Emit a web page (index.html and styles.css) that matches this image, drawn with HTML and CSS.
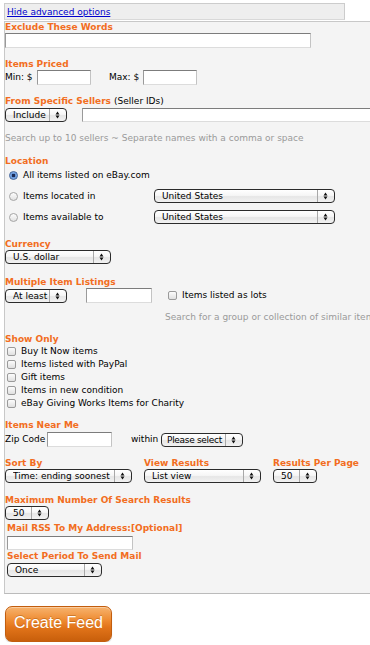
FILE: index.html
```html
<!DOCTYPE html>
<html lang="en">
<head>
    <meta charset="UTF-8">
    <title>Create Feed - Advanced Options</title>
    <link rel="stylesheet" href="styles.css">
</head>
<body>
    <div class="tab"><a href="#">Hide advanced options</a></div>
    <form class="panel">
        <h4 class="lbl">Exclude These Words</h4>
        <input class="txt exclude" type="text">

        <h4 class="lbl m11">Items Priced</h4>
        <div class="row">
            <span class="price-lbl">Min: $</span><input class="txt price" type="text">
            <span class="price-lbl max">Max: $</span><input class="txt price" type="text">
        </div>

        <h4 class="lbl m11">From Specific Sellers <span class="plain">(Seller IDs)</span></h4>
        <div class="row seller-row">
            <select class="sel sel-include"><option>Include</option></select>
            <input class="txt sellers" type="text">
        </div>
        <p class="hint">Search up to 10 sellers ~ Separate names with a comma or space</p>

        <h4 class="lbl m11">Location</h4>
        <label class="loc"><input type="radio" name="loc" checked><span>All items listed on eBay.com</span></label>
        <label class="loc"><input type="radio" name="loc"><span class="loc-txt">Items located in</span>
            <select class="sel sel-country"><option>United States</option></select></label>
        <label class="loc"><input type="radio" name="loc"><span class="loc-txt">Items available to</span>
            <select class="sel sel-country"><option>United States</option></select></label>

        <h4 class="lbl m15">Currency</h4>
        <select class="sel sel-currency"><option>U.S. dollar</option></select>

        <h4 class="lbl m13">Multiple Item Listings</h4>
        <div class="row multi-row">
            <select class="sel sel-include"><option>At least</option></select>
            <input class="txt qty" type="text">
            <label class="chk lots"><input type="checkbox"><span>Items listed as lots</span></label>
        </div>
        <p class="hint lots-hint">Search for a group or collection of similar items</p>

        <h4 class="lbl m10">Show Only</h4>
        <label class="chk show"><input type="checkbox"><span>Buy It Now items</span></label>
        <label class="chk show"><input type="checkbox"><span>Items listed with PayPal</span></label>
        <label class="chk show"><input type="checkbox"><span>Gift items</span></label>
        <label class="chk show"><input type="checkbox"><span>Items in new condition</span></label>
        <label class="chk show"><input type="checkbox"><span>eBay Giving Works Items for Charity</span></label>

        <h4 class="lbl m10">Items Near Me</h4>
        <div class="row zip-row">
            <span class="zip-lbl">Zip Code</span><input class="txt zip" type="text">
            <span class="within">within</span>
            <select class="sel sel-within"><option>Please select</option></select>
        </div>

        <div class="sort-grid">
            <div>
                <h4 class="lbl">Sort By</h4>
                <select class="sel sel-sort"><option>Time: ending soonest</option></select>
            </div>
            <div>
                <h4 class="lbl">View Results</h4>
                <select class="sel sel-view"><option>List view</option></select>
            </div>
            <div>
                <h4 class="lbl">Results Per Page</h4>
                <select class="sel sel-num"><option>50</option></select>
            </div>
        </div>

        <h4 class="lbl m12">Maximum Number Of Search Results</h4>
        <select class="sel sel-num"><option>50</option></select>

        <div class="mail">
            <h4 class="lbl m3">Mail RSS To My Address:[Optional]</h4>
            <input class="txt email" type="text">
            <h4 class="lbl m1">Select Period To Send Mail</h4>
            <select class="sel sel-period"><option>Once</option></select>
        </div>
    </form>
    <button class="create" type="button">Create Feed</button>
</body>
</html>
```

FILE: styles.css
```css
html, body {
    overflow: hidden;
}
body {
    margin: 0;
    background: #fff;
    font-family: "DejaVu Sans", Verdana, sans-serif;
    font-size: 9px;
    line-height: 13px;
    color: #000;
}
.tab {
    margin: 3px 0 0 4px;
    width: 337px;
    height: 15px;
    padding-left: 2px;
    border: 1px solid #ccc;
    border-bottom-color: #d8d8d8;
    background: #eee;
    box-sizing: content-box;
}
.tab a {
    display: block;
    padding-top: 2px;
    line-height: 13px;
    color: #0000cc;
}
.panel {
    margin: 1px 0 0 4px;
    width: 420px;
    padding: 0 0 16px 0;
    border: 1px solid #c8c8c8;
    border-bottom-color: #bbb;
    background: #f4f4f4;
}
.lbl {
    margin: 0;
    font-size: 9px;
    line-height: 11px;
    font-weight: bold;
    color: #f26d21;
    white-space: nowrap;
}
.lbl .plain {
    font-weight: normal;
    color: #000;
}
.m1 { margin-top: 1px; }
.m3 { margin-top: 3px; }
.m10 { margin-top: 10px; }
.m11 { margin-top: 11px; }
.m12 { margin-top: 12px; }
.m13 { margin-top: 13px; }
.m15 { margin-top: 15px; }

/* text fields */
.txt {
    display: block;
    flex-shrink: 0;
    box-sizing: border-box;
    height: 15px;
    margin: 0;
    padding: 0 2px;
    font: 9px "DejaVu Sans", Verdana, sans-serif;
    background: #fff;
    border: 1px solid;
    border-color: #7c7c7c #c3c3c3 #dcdcdc #9a9a9a;
}
.exclude { width: 306px; }
.price { width: 54px; }
.sellers { width: 320px; height: 14px; margin-left: 15px; }
.qty { width: 66px; margin-left: 19px; }
.zip { width: 65px; }
.email { width: 126px; height: 14px; margin-top: 2px; }

/* pop-up menus */
.sel {
    display: block;
    flex-shrink: 0;
    box-sizing: border-box;
    height: 14px;
    margin: 0;
    padding: 0 16px 0 7px;
    font: 9px "DejaVu Sans", Verdana, sans-serif;
    line-height: 12px;
    color: #000;
    border: 1px solid #2b2b2b;
    border-radius: 4px;
    appearance: none;
    -webkit-appearance: none;
    background: url("data:image/svg+xml,%3Csvg xmlns='http://www.w3.org/2000/svg' width='17' height='12'%3E%3Cpath d='M0.5 0v12' stroke='%23a8a8a8'/%3E%3Cpath d='M6.5 5.5l2-3 2 3zM6.5 6.5l2 3 2-3z' fill='%23111'/%3E%3C/svg%3E") no-repeat right center,
        linear-gradient(#fff, #f6f6f6 45%, #e6e6e6 55%, #f2f2f2);
}
.sel-include { width: 62px; }
.sel-country { width: 181px; }
.sel-currency { width: 106px; }
.sel-within { width: 82px; padding-left: 5px; padding-right: 14px; letter-spacing: -0.3px; }
.sel-sort { width: 127px; }
.sel-view { width: 117px; }
.sel-num { width: 44px; }
.sel-period { width: 95px; }

.row {
    display: flex;
    align-items: center;
    height: 15px;
    white-space: nowrap;
}
.price-lbl { width: 32px; flex-shrink: 0; }
.price-lbl.max { width: 34px; margin-left: 18px; }
.seller-row {
    margin-top: 1px;
    height: 14px;
}
.hint {
    margin: 10px 0 0 0;
    color: #9a9a9a;
    white-space: nowrap;
}
.lots-hint {
    margin: 8px 0 0 160px;
}

/* location radios */
.loc {
    display: flex;
    align-items: center;
    height: 14px;
    margin-top: 7px;
    white-space: nowrap;
}
.lbl + .loc {
    margin-top: 1px;
}
.loc-txt {
    width: 131px;
    flex-shrink: 0;
}
input[type="radio"] {
    appearance: none;
    -webkit-appearance: none;
    flex-shrink: 0;
    width: 9px;
    height: 9px;
    margin: 0 5px 0 4px;
    border: 1px solid #a4a4a4;
    border-radius: 50%;
    background: linear-gradient(#fdfdfd, #e2e2e2);
    box-sizing: border-box;
}
input[type="radio"]:checked {
    border-color: #3a5f9a;
    background: radial-gradient(circle at 50% 50%, #1b2a55 0, #1b2a55 1.5px, #5d8fd6 2px, #a8c8f0 4.5px);
}

/* checkboxes */
.chk {
    display: flex;
    align-items: center;
    height: 13px;
    white-space: nowrap;
}
input[type="checkbox"] {
    appearance: none;
    -webkit-appearance: none;
    flex-shrink: 0;
    width: 9px;
    height: 9px;
    margin: 0 5px 0 2px;
    border: 1px solid #9a9a9a;
    border-radius: 2px;
    background: linear-gradient(#fcfcfc, #e0e0e0);
    box-sizing: border-box;
}
.lots {
    margin-left: 14px;
}

.zip-row {
    margin-top: 1px;
}
.zip-lbl {
    width: 42px;
    flex-shrink: 0;
}
.within {
    margin-left: 19px;
    width: 30px;
    flex-shrink: 0;
}

.sort-grid {
    display: grid;
    grid-template-columns: 139px 129px auto;
    margin-top: 11px;
    width: 340px;
}

.mail {
    padding-left: 2px;
}
.mail .sel {
    margin-top: 1px;
}

.create {
    display: block;
    margin: 12px 0 0 5px;
    width: 107px;
    height: 36px;
    padding: 0 0 2px 0;
    border: 1px solid #c25d0e;
    border-radius: 7px;
    font: 16px "Liberation Sans", Arial, sans-serif;
    color: #fff;
    background: linear-gradient(#f7b36e, #ee8a30 40%, #e2741a 60%, #c85f0b);
    box-shadow: inset 0 1px 0 rgba(255, 255, 255, 0.35), 0 1px 1px rgba(0, 0, 0, 0.2);
    text-shadow: 0 -1px 0 rgba(150, 70, 0, 0.4);
    cursor: pointer;
}
```
